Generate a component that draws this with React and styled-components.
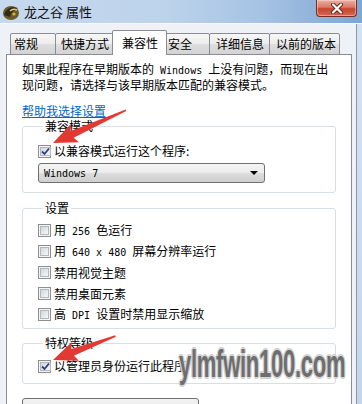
import React from 'react'
import styled, { createGlobalStyle } from 'styled-components'

const GlobalStyle = createGlobalStyle`
  *, *::before, *::after { box-sizing: border-box; }
  html, body { margin: 0; padding: 0; }
  body {
    font-family: "Noto Sans CJK SC", "Liberation Sans", sans-serif;
    font-size: 12px;
    color: #000;
    background: #fff;
  }
`

const Window = styled.div`
  position: relative;
  width: 362px;
  height: 404px;
  overflow: hidden;
  display: flex;
  flex-direction: column;
  background: #eef2f6;
`

const TitleBar = styled.div`
  height: 24px;
  flex-shrink: 0;
  display: flex;
  align-items: center;
  gap: 3px;
  padding-left: 1px;
  background: linear-gradient(90deg, #c6d9ee 0%, #bdd3eb 45%, #a6c3e4 72%, #7ea6d3 100%);
  border-bottom: 1px solid #f6f9fc;
`

const TitleText = styled.span`
  font-size: 13px;
  line-height: 16px;
  color: #111;
  margin-top: 1px;
`

const CloseButton = styled.div`
  margin-left: auto;
  margin-right: 5px;
  align-self: flex-start;
  width: 41px;
  height: 17px;
  display: flex;
  align-items: center;
  justify-content: center;
  border: 1px solid #7a2c20;
  border-top: none;
  border-radius: 0 0 4px 4px;
  background: linear-gradient(#eab1a3 0%, #d97a66 45%, #c4442f 55%, #d9684f 100%);
  box-shadow: inset 0 0 0 1px rgba(255, 220, 210, 0.5);
`

const Body = styled.div`
  flex: 1;
  display: flex;
  min-height: 0;
`

const Dialog = styled.div`
  flex: 1;
  display: flex;
  flex-direction: column;
  padding: 7px 4px 0 6px;
`

const RightFrame = styled.div`
  width: 6px;
  border-left: 1px solid #8d96a3;
  background: linear-gradient(#d4e3f3, #c2d6ec);
`

const TabRow = styled.div`
  display: flex;
  align-items: flex-end;
  padding-left: 4px;
  height: 24px;
  position: relative;
  z-index: 1;
  margin-bottom: -1px;
`

const Tab = styled.div`
  width: ${p => p.w}px;
  height: ${p => (p.active ? 25 : 22)}px;
  margin-left: ${p => (p.active ? -2 : -1)}px;
  margin-right: ${p => (p.active ? -2 : 0)}px;
  padding-left: ${p => p.pl}px;
  display: flex;
  align-items: center;
  font-size: 12px;
  line-height: 14px;
  border: 1px solid #898c95;
  border-bottom: ${p => (p.active ? 'none' : '1px solid #898c95')};
  border-radius: 2px 2px 0 0;
  background: ${p =>
    p.active
      ? '#fff'
      : 'linear-gradient(#f7f7f7 0%, #ececec 50%, #dedede 51%, #d3d3d3 100%)'};
  position: relative;
  z-index: ${p => (p.active ? 2 : 1)};
  &:first-child { margin-left: 0; }
`

const Panel = styled.div`
  flex: 1;
  background: #fff;
  border: 1px solid #898c95;
  border-bottom: none;
  padding: 7px 15px 0 15px;
  display: flex;
  flex-direction: column;
`

const Description = styled.div`
  line-height: 14px;
  white-space: pre;
`

const Mono = styled.span`
  font-family: "DejaVu Sans Mono", "Liberation Mono", monospace;
  font-size: 10px;
  white-space: pre;
`

const HelpLink = styled.a`
  margin-top: 12px;
  align-self: flex-start;
  line-height: 14px;
  color: #0066cc;
  text-decoration: underline;
  cursor: pointer;
`

const Group = styled.fieldset`
  margin: ${p => p.mt}px 0 0 0;
  padding: ${p => p.pt}px 0 ${p => p.pb}px 15px;
  border: 1px solid #d5dfe5;
  border-radius: 3px;
  min-width: 0;
`

const Legend = styled.legend`
  margin-left: 5px;
  padding: 0 2px;
  line-height: 14px;
  font-size: 12px;
`

const Row = styled.div`
  height: ${p => p.h || 16}px;
  display: flex;
  align-items: center;
  gap: 3px;
  white-space: pre;
  line-height: 14px;
`

const Box = styled.span`
  width: 13px;
  height: 13px;
  flex-shrink: 0;
  border: 1px solid #8f8f8f;
  background: #f4f4f4;
  padding: 1px;
  display: flex;
`

const BoxInner = styled.span`
  flex: 1;
  display: flex;
  align-items: center;
  justify-content: center;
  border: 1px solid #b3b8bf;
  background: linear-gradient(135deg, #d2d5da 0%, #e8eaec 60%, #f7f7f7 100%);
`

const Select = styled.div`
  margin-top: 4px;
  width: 227px;
  height: 20px;
  display: flex;
  align-items: center;
  justify-content: space-between;
  padding: 0 6px 0 5px;
  border: 1px solid #707070;
  border-radius: 3px;
  background: linear-gradient(#f4f4f4 0%, #ebebeb 50%, #dddddd 51%, #cfcfcf 100%);
`

const Caret = styled.span`
  width: 0;
  height: 0;
  border-left: 4px solid transparent;
  border-right: 4px solid transparent;
  border-top: 4px solid #000;
`

const Button = styled.div`
  margin-top: 14px;
  width: 177px;
  height: 23px;
  display: flex;
  align-items: center;
  justify-content: center;
  border: 1px solid #707070;
  border-radius: 3px;
  background: linear-gradient(#f2f2f2 0%, #ebebeb 50%, #dddddd 51%, #cfcfcf 100%);
  line-height: 14px;
`

const Watermark = styled.div`
  position: absolute;
  left: 179px;
  top: 342px;
  font-family: "Liberation Sans", sans-serif;
  font-weight: bold;
  font-size: 38px;
  line-height: 44px;
  letter-spacing: -0.5px;
  color: #6e6e6e;
  transform: scaleX(0.58);
  transform-origin: left center;
  white-space: nowrap;
  text-shadow: 1px 1px 0 #d6d6d6, -1px -1px 0 #d6d6d6, 1px -1px 0 #d6d6d6, -1px 1px 0 #d6d6d6,
    2px 0 0 #cfcfcf, -2px 0 0 #cfcfcf, 0 2px 0 #cfcfcf, 0 -2px 0 #cfcfcf;
  pointer-events: none;
`

const Annotations = styled.svg`
  position: absolute;
  left: 0;
  top: 0;
  pointer-events: none;
`

const tabs = [
  { label: '常规', w: 46, pl: 3 },
  { label: '快捷方式', w: 59, pl: 5 },
  { label: '兼容性', w: 55, pl: 9, active: true },
  { label: '安全', w: 46, pl: 3 },
  { label: '详细信息', w: 61, pl: 6 },
  { label: '以前的版本', w: 71, pl: 6 },
]

const settings = [
  <>用<Mono> 256 </Mono>色运行</>,
  <>用<Mono> 640 x 480 </Mono>屏幕分辨率运行</>,
  <>禁用视觉主题</>,
  <>禁用桌面元素</>,
  <>高<Mono> DPI </Mono>设置时禁用显示缩放</>,
]

const Checkbox = ({ checked }) => (
  <Box>
    <BoxInner>
      {checked && (
        <svg width="9" height="9" viewBox="0 0 9 9">
          <path d="M1 4.5 L3.5 7 L8 1.5" fill="none" stroke="#2a3f8a" strokeWidth="1.8" />
        </svg>
      )}
    </BoxInner>
  </Box>
)

const Arrow = ({ x, y, angle, len }) => (
  <g transform={`translate(${x} ${y}) rotate(${angle})`}>
    <polygon
      points={`0,0 24,-10 21,-3.6 ${len},-0.8 ${len},0.8 21,3.6 24,10`}
      fill="#e23a32"
    />
  </g>
)

const AppIcon = () => (
  <svg width="20" height="20" viewBox="0 0 20 20">
    <ellipse cx="10" cy="11" rx="8" ry="7" fill="#6b5a2a" />
    <path d="M3 13 C5 6 11 4 17 6 C13 8 10 10 9 15 Z" fill="#2e2a1c" />
    <path d="M9 9 C11 7 14 7 16 8" stroke="#e6c468" strokeWidth="1.5" fill="none" />
    <circle cx="13" cy="12" r="1.6" fill="#d8b24c" />
  </svg>
)

const App = () => (
  <Window>
    <GlobalStyle />
    <TitleBar>
      <AppIcon />
      <TitleText>龙之谷 属性</TitleText>
      <CloseButton>
        <svg width="14" height="11" viewBox="0 0 14 11">
          <path d="M3 1.5 L11 9.5 M11 1.5 L3 9.5" stroke="#6a2418" strokeWidth="4" strokeLinecap="round" />
          <path d="M3 1.5 L11 9.5 M11 1.5 L3 9.5" stroke="#fff" strokeWidth="2.2" strokeLinecap="round" />
        </svg>
      </CloseButton>
    </TitleBar>
    <Body>
      <Dialog>
        <TabRow>
          {tabs.map(t => (
            <Tab key={t.label} w={t.w} pl={t.pl} active={t.active}>
              {t.label}
            </Tab>
          ))}
        </TabRow>
        <Panel>
          <Description>
            <div>如果此程序在早期版本的<Mono> Windows </Mono>上没有问题，而现在出</div>
            <div>现问题，请选择与该早期版本匹配的兼容模式。</div>
          </Description>
          <HelpLink>帮助我选择设置</HelpLink>

          <Group mt={1} pt={10} pb={9}>
            <Legend>兼容模式</Legend>
            <Row>
              <Checkbox checked />
              <span>以兼容模式运行这个程序:</span>
            </Row>
            <Select>
              <Mono>Windows 7</Mono>
              <Caret />
            </Select>
          </Group>

          <Group mt={8} pt={5} pb={3}>
            <Legend>设置</Legend>
            {settings.map((s, i) => (
              <Row key={i} h={21}>
                <Checkbox />
                <span>{s}</span>
              </Row>
            ))}
          </Group>

          <Group mt={7} pt={8} pb={9}>
            <Legend>特权等级</Legend>
            <Row>
              <Checkbox checked />
              <span>以管理员身份运行此程序</span>
            </Row>
          </Group>

          <Button>更改所有用户的设置</Button>
        </Panel>
      </Dialog>
      <RightFrame />
    </Body>

    <Watermark>ylmfwin100.com</Watermark>
    <Annotations width="362" height="404" viewBox="0 0 362 404">
      <Arrow x={53} y={143} angle={-24.2} len={80} />
      <Arrow x={53} y={360} angle={-21} len={67} />
    </Annotations>
  </Window>
)

export default App
